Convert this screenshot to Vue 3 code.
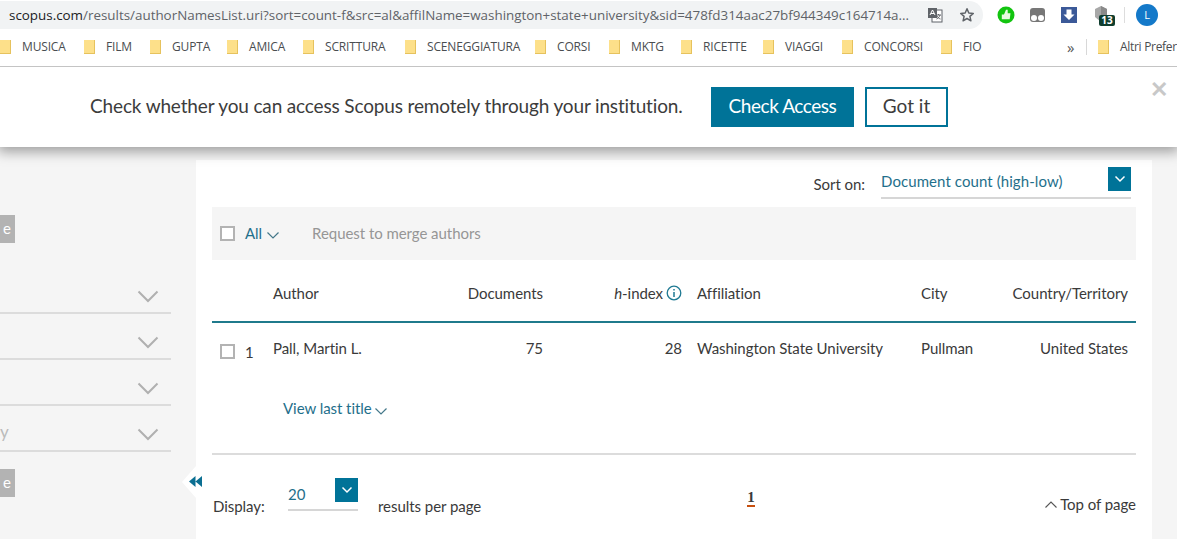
<script setup>
const bookmarks = [
  { name: 'MUSICA', w: 84 }, { name: 'FILM', w: 66 }, { name: 'GUPTA', w: 77 }, { name: 'AMICA', w: 76 },
  { name: 'SCRITTURA', w: 102 }, { name: 'SCENEGGIATURA', w: 130 }, { name: 'CORSI', w: 74 }, { name: 'MKTG', w: 72 },
  { name: 'RICETTE', w: 82 }, { name: 'VIAGGI', w: 79 }, { name: 'CONCORSI', w: 99 }, { name: 'FIO', w: 60 }
]
const filters = [{ t: '' }, { t: '' }, { t: '' }, { t: 'y' }]
</script>

<template>
  <div class="page">
    <header class="chrome">
      <div class="toprow">
        <div class="omnibox">
          <span class="url"><b>scopus.com</b>/results/authorNamesList.uri?sort=count-f&amp;src=al&amp;affilName=washington+state+university&amp;sid=478fd314aac27bf944349c164714a...</span>
          <svg class="translate" width="16" height="16" viewBox="0 0 16 16">
            <rect x="5" y="3" width="10" height="12" fill="#fff" stroke="#5f6368" />
            <rect x="1" y="1" width="9" height="10" fill="#5f6368" />
            <path d="M3 8l2.500-5L8 8M4 6.500h3" stroke="#fff" fill="none" />
            <path d="M9 8h5M11.500 7v1M13 8c-.5 2-2 3.500-3.500 4M10 9c.6 1.400 2 2.600 3.500 3" stroke="#5f6368" fill="none" />
          </svg>
          <svg class="star" width="16" height="16" viewBox="0 0 16 16"><path d="M8 1.800l1.800 4.200 4.500.4-3.400 3 1 4.400L8 11.500l-3.900 2.300 1-4.400-3.400-3 4.500-.4z" fill="none" stroke="#5f6368" stroke-width="1.500" stroke-linejoin="round" /></svg>
        </div>
        <div class="exts">
          <svg class="e1" width="18" height="18" viewBox="0 0 18 18"><circle cx="9" cy="9" r="8.500" fill="#12c40f" /><path d="M4.800 8.500h2.200L9 3.800h1.700v3.400h2.800l-.8 6H4.800z" fill="#e8fbe0" /></svg>
          <svg class="e2" width="15" height="15" viewBox="0 0 15 15"><rect width="15" height="14" rx="3" fill="#777" y="0" /><circle cx="4" cy="10" r="3" fill="#fff" /><circle cx="11" cy="10" r="3" fill="#fff" /></svg>
          <svg class="e3" width="16" height="16" viewBox="0 0 16 16"><rect width="16" height="16" fill="#3b5998" /><path d="M5.500 2.500h5v5h3L8 13 2.500 7.500h3z" fill="#fff" /></svg>
          <div class="e4">
            <svg width="14" height="17" viewBox="0 0 14 17"><path d="M7 0l6 3v8l-6 5-6-5V3z" fill="#a8a8a8" /><path d="M7 0l6 3v8l-6 5z" fill="#8a8a8a" /></svg>
            <span class="badge">13</span>
          </div>
          <i class="vsep"></i>
          <span class="avatar">L</span>
        </div>
      </div>
      <div class="bookmarks">
        <div v-for="b in bookmarks" :key="b.name" class="bm" :style="{ width: b.w + 'px' }">
          <i class="folder"></i><span>{{ b.name }}</span>
        </div>
        <span class="more">»</span>
        <i class="bsep"></i>
        <div class="bm last"><i class="folder"></i><span>Altri Prefer</span></div>
      </div>
    </header>

    <section class="banner">
      <p>Check whether you can access Scopus remotely through your institution.</p>
      <button class="primary">Check Access</button>
      <button class="outline">Got it</button>
      <span class="close">✕</span>
    </section>

    <div class="content">
      <aside class="side">
        <div class="side-btn first">e</div>
        <div class="filters">
          <div v-for="(f, i) in filters" :key="i" class="filter">
            <span class="ftext">{{ f.t }}</span>
            <svg width="22" height="13" viewBox="0 0 22 13"><path d="M1.500 1.500L11 11l9.500-9.500" fill="none" stroke="#b0b0b0" stroke-width="2" /></svg>
          </div>
        </div>
        <div class="side-btn second">e</div>
      </aside>

      <main class="main">
        <span class="collapse">
          <svg width="13" height="11" viewBox="0 0 13 11"><path d="M6.500 0v11L0 5.500zM13 0v11L6.500 5.500z" fill="#0b6f92" /></svg>
        </span>

        <div class="sort">
          <span class="sort-label">Sort on:</span>
          <div class="select">
            <span>Document count (high-low)</span>
            <span class="sq"><svg width="12" height="8" viewBox="0 0 12 8"><path d="M1.500 1.500L6 6l4.500-4.500" fill="none" stroke="#fff" stroke-width="1.500" /></svg></span>
          </div>
        </div>

        <div class="toolbar">
          <i class="check"></i>
          <span class="link all">All</span>
          <svg class="mini" width="12" height="7" viewBox="0 0 12 7"><path d="M.5.500L6 6 11.500.500" fill="none" stroke="#44788a" stroke-width="1.200" /></svg>
          <span class="merge">Request to merge authors</span>
        </div>

        <div class="grid head">
          <span class="c-author">Author</span>
          <span class="c-docs">Documents</span>
          <span class="c-h"><span><em>h</em>-index</span><svg width="16" height="16" viewBox="0 0 16 16"><circle cx="8" cy="8" r="6.800" fill="none" stroke="#1f7a93" stroke-width="1.300" /><path d="M8 7v5M8 4v1.600" stroke="#1f7a93" stroke-width="1.500" /></svg></span>
          <span class="c-aff">Affiliation</span>
          <span class="c-city">City</span>
          <span class="c-country">Country/Territory</span>
        </div>

        <div class="grid row">
          <span class="c-num"><i class="check"></i><span>1</span></span>
          <span class="c-author">Pall, Martin L.</span>
          <span class="c-docs">75</span>
          <span class="c-h">28</span>
          <span class="c-aff">Washington State University</span>
          <span class="c-city">Pullman</span>
          <span class="c-country">United States</span>
        </div>

        <div class="last-title">
          <span class="link">View last title</span>
          <svg class="mini" width="12" height="7" viewBox="0 0 12 7"><path d="M.5.500L6 6 11.500.500" fill="none" stroke="#44788a" stroke-width="1.200" /></svg>
        </div>

        <footer class="foot">
          <div class="display">
            <span class="d-label">Display:</span>
            <div class="d-select">
              <span class="d-val">20</span>
              <span class="sq"><svg width="12" height="8" viewBox="0 0 12 8"><path d="M1.500 1.500L6 6l4.500-4.500" fill="none" stroke="#fff" stroke-width="1.500" /></svg></span>
            </div>
            <span class="d-after">results per page</span>
          </div>
          <span class="pager">1</span>
          <span class="top">
            <svg width="12" height="7" viewBox="0 0 12 7"><path d="M.5 6.500L6 1l5.500 5.500" fill="none" stroke="#555" stroke-width="1.100" /></svg>
            Top of page
          </span>
        </footer>
      </main>
    </div>
  </div>
</template>

<style>
html, body { margin: 0; overflow: hidden; }
</style>

<style scoped>
.page { width: 1177px; height: 539px; overflow: hidden; display: flex; flex-direction: column; background: #f5f5f5; font-family: Lato, "Open Sans", sans-serif; color: #3a3a3a; }
.chrome { height: 67px; flex: none; background: #fff; border-bottom: 1px solid #c4c4c4; box-sizing: border-box; position: relative; z-index: 3; }
.toprow { height: 33px; display: flex; align-items: flex-start; }
.omnibox { width: 983px; height: 28px; margin-top: 1px; background: #f1f3f4; border-radius: 0 14px 14px 0; display: flex; align-items: center; padding-left: 9px; box-sizing: border-box; }
.url { width: 918px; white-space: nowrap; overflow: hidden; font: 13.4px "Open Sans", sans-serif; color: #5f6368; }
.url b { font-weight: 400; color: #202124; }
.translate { flex: none; }
.star { margin-left: 16px; flex: none; }
.exts { display: flex; align-items: center; height: 30px; position: relative; }
.e1 { margin-left: 14px; }
.e2 { margin-left: 15px; }
.e3 { margin-left: 16px; }
.e4 { margin-left: 17px; position: relative; width: 14px; height: 17px; margin-top: -2px; }
.badge { position: absolute; left: 5px; top: 9px; width: 16px; height: 11px; border-radius: 2px; background: #0f3d2e; color: #fff; font: 700 10px/11px "Open Sans", sans-serif; text-align: center; }
.vsep { width: 1px; height: 16px; background: #ddd; margin-left: 16px; }
.avatar { width: 22px; height: 22px; margin-left: 11px; border-radius: 50%; background: #1479c9; color: #fff; font: 11px/22px "Open Sans", sans-serif; text-align: center; }
.bookmarks { height: 27px; display: flex; align-items: center; font: 12px "Open Sans", sans-serif; letter-spacing: -.15px; color: #4a4d50; white-space: nowrap; }
.bm { display: flex; align-items: center; flex: none; box-sizing: border-box; }
.folder { width: 11px; height: 14px; background: #fde08a; border-right: 1px solid #e6c25d; border-bottom: 1px solid #e6c25d; box-sizing: border-box; margin-right: 11px; flex: none; }
.more { margin-left: 66px; width: 19px; flex: none; font-size: 15px; color: #555; }
.bsep { width: 1px; height: 16px; flex: none; background: #d8d8d8; margin-right: 11px; }
.bm.last { width: 79px; letter-spacing: -.3px; }
.banner { flex: none; background: #fff; box-shadow: 0 3px 12px 2px rgba(0, 0, 0, .35); position: relative; z-index: 2; display: flex; align-items: center; padding-left: 90px; box-sizing: border-box; height: 80px; }
.banner p { margin: 0 0 3px; font-size: 19px; letter-spacing: -.15px; color: #3c3c3c; white-space: nowrap; width: 621px; }
.banner button { height: 40px; box-sizing: border-box; font-family: inherit; font-size: 19px; border: 0; padding: 0 0 3px; }
.primary { width: 143px; background: #007398; color: #fff; letter-spacing: -.45px; }
.outline { width: 83px; margin-left: 11px; background: #fff; color: #3c3c3c; border: 2px solid #007398 !important; }
.close { position: absolute; right: 9px; top: 9px; color: #c8c8c8; font-size: 22px; font-weight: 700; line-height: 26px; }
.content { flex: 1; display: flex; min-height: 0; }
.side { width: 196px; flex: none; padding-top: 68px; box-sizing: border-box; }
.side-btn { width: 15px; height: 28px; background: #b3b3b3; color: #fff; font-size: 15px; line-height: 27px; text-align: right; box-sizing: border-box; padding-right: 4px; }
.filters { margin-top: 25px; width: 171px; }
.filter { height: 46px; border-bottom: 2px solid #dcdcdc; box-sizing: border-box; display: flex; align-items: center; justify-content: flex-end; padding-right: 12px; position: relative; padding-top: 12px; }
.ftext { position: absolute; left: 0; color: #bbb; font-size: 17px; bottom: 8px; }
.second { margin-top: 17px; }
.main { width: 956px; flex: none; margin-top: 13px; background: #fff; box-sizing: border-box; padding: 0 16px; position: relative; font-size: 15px; letter-spacing: -.05px; }
.collapse { position: absolute; left: -14px; top: 306px; width: 14px; height: 32px; }
.collapse::before { content: ""; position: absolute; inset: 0; background: #fff; clip-path: polygon(100% 0, 100% 100%, 0 50%); }
.collapse svg { position: absolute; left: 7px; top: 10px; z-index: 1; }
.sort { height: 47px; display: flex; justify-content: flex-end; align-items: flex-start; padding-right: 5px; }
.sort-label { margin-top: 15px; margin-right: 16px; }
.select { width: 250px; height: 39px; border-bottom: 2px solid #d6d6d6; box-sizing: border-box; display: flex; justify-content: space-between; align-items: flex-start; color: #1f6f8b; padding-top: 7px; letter-spacing: .08px; }
.select span:first-child { margin-top: 5px; }
.sq { width: 23px; height: 24px; background: #007398; display: flex; align-items: center; justify-content: center; flex: none; }
.toolbar { height: 53px; background: #f5f5f5; display: flex; align-items: center; padding-left: 8px; }
.toolbar .all, .toolbar .merge { margin-bottom: 1px; }
.check { display: inline-block; width: 15px; height: 15px; border: 2px solid #b3b3b3; background: #fff; box-sizing: border-box; flex: none; }
.link { color: #1f6f8b; }
.all { margin-left: 10px; }
.mini { margin-left: 5px; margin-top: 4px; flex: none; }
.merge { margin-left: 33px; color: #969696; }
.grid { display: grid; grid-template-columns: 61px 130px 140px 139px 239px 1fr; box-sizing: border-box; padding-right: 8px; }
.grid .c-author { grid-column: 2; }
.c-docs { grid-column: 3; text-align: right; }
.c-h { grid-column: 4; text-align: right; display: flex; justify-content: flex-end; align-items: center; gap: 3px; white-space: nowrap; }
.c-aff { grid-column: 5; padding-left: 15px; white-space: nowrap; }
.c-city { grid-column: 6; grid-row: 1; }
.c-country { grid-column: 6; grid-row: 1; text-align: right; white-space: nowrap; }
.head { height: 63px; align-items: center; border-bottom: 2px solid #1f7a8c; padding-top: 5px; }
.c-h em { font-style: italic; }
.row { height: 50px; padding-top: 16px; align-items: start; }
.c-num { grid-column: 1; display: flex; align-items: center; padding-left: 8px; gap: 10px; margin-top: 5px; height: 15px; }
.last-title { height: 80px; margin-left: 71px; margin-right: -71px; padding-top: 26px; box-sizing: border-box; display: flex; align-items: flex-start; }
.last-title .mini { margin-top: 9px; margin-left: 3px; }
.foot { border-top: 2px solid #dcdcdc; height: 90px; box-sizing: border-box; display: flex; position: relative; }
.display { display: flex; align-items: flex-start; padding-top: 23px; width: 535px; }
.d-label { margin-left: 1px; margin-top: 19px; width: 75px; }
.d-select { width: 70px; height: 31px; border-bottom: 2px solid #d6d6d6; box-sizing: content-box; display: flex; justify-content: space-between; align-items: flex-start; color: #1f6f8b; }
.d-val { margin-top: 7px; }
.d-after { margin-left: 20px; margin-top: 19px; }
.pager { margin-top: 33px; height: 17px; line-height: 18px; border-bottom: 2px solid #c8500f; font-weight: 700; font-size: 15px; font-family: "Liberation Serif", serif; box-sizing: content-box; width: 8px; text-align: center; letter-spacing: 0; }
.top { margin-left: auto; margin-top: 39px; height: 20px; display: flex; align-items: center; gap: 3px; white-space: nowrap; }
</style>
